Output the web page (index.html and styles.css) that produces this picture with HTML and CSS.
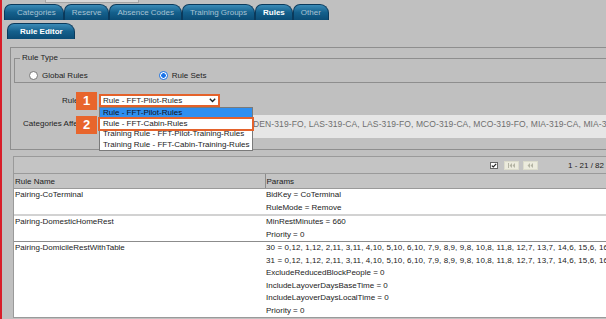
FILE: index.html
```html
<!DOCTYPE html>
<html>
<head>
    <title>Rules - Rule Editor</title>
    <meta charset="UTF-8">
    <meta name="viewport" content="width=device-width, initial-scale=1.0">
    <link rel="stylesheet" href="styles.css">
</head>
<body>
    <div class="page">
        <div class="top-stub"></div>

        <ul class="tabs">
            <li class="tab">Categories</li>
            <li class="tab">Reserve</li>
            <li class="tab">Absence Codes</li>
            <li class="tab">Training Groups</li>
            <li class="tab active">Rules</li>
            <li class="tab">Other</li>
        </ul>
        <ul class="tabs sub-tabs">
            <li class="tab active">Rule Editor</li>
        </ul>

        <div class="editor">
            <fieldset class="rule-type">
                <legend>Rule Type</legend>
                <div class="radios">
                    <label class="radio-opt"><span class="radio"></span>Global Rules</label>
                    <label class="radio-opt"><span class="radio checked"></span>Rule Sets</label>
                </div>
            </fieldset>

            <div class="form-grid">
                <div class="form-label">Rule Set:</div>
                <div class="select-wrap">
                    <div class="select">
                        <span>Rule - FFT-Pilot-Rules</span>
                        <svg width="7" height="5" viewBox="0 0 7 5"><path d="M0.8 0.8 L3.5 3.6 L6.2 0.8" fill="none" stroke="#222" stroke-width="1.4"/></svg>
                    </div>
                    <ul class="dropdown">
                        <li class="selected">Rule - FFT-Pilot-Rules</li>
                        <li class="marked">Rule - FFT-Cabin-Rules</li>
                        <li>Training Rule - FFT-Pilot-Training-Rules</li>
                        <li>Training Rule - FFT-Cabin-Training-Rules</li>
                    </ul>
                    <span class="badge badge-1">1</span>
                    <span class="badge badge-2">2</span>
                </div>

                <div class="form-label cat-label">Categories Affected:</div>
                <div class="cat-field">ATL-319-CA, ATL-319-FO, DEN-319-CA, DEN-319-FO, LAS-319-CA, LAS-319-FO, MCO-319-CA, MCO-319-FO, MIA-319-CA, MIA-319-FO, ORD-319-CA, ORD-319-FO</div>
            </div>
        </div>

        <div class="grid">
            <div class="grid-toolbar">
                <span class="check">
                    <svg width="6" height="5" viewBox="0 0 6 5"><path d="M0.8 2.6 L2.3 4 L5.2 0.8" fill="none" stroke="#222" stroke-width="1.2"/></svg>
                </span>
                <span class="pager-btn">
                    <svg width="7" height="5" viewBox="0 0 7 5"><rect x="0" y="0" width="1" height="5" fill="#b4b4a4"/><path d="M4 0 L1.5 2.5 L4 5 Z M7 0 L4.5 2.5 L7 5 Z" fill="#b4b4a4"/></svg>
                </span>
                <span class="pager-btn">
                    <svg width="6" height="5" viewBox="0 0 6 5"><path d="M3 0 L0.5 2.5 L3 5 Z M6 0 L3.5 2.5 L6 5 Z" fill="#b4b4a4"/></svg>
                </span>
                <span class="pager-info">1 - 21 / 82</span>
            </div>

            <table class="rules">
                <colgroup>
                    <col class="col-name">
                    <col>
                </colgroup>
                <thead>
                    <tr>
                        <th>Rule Name</th>
                        <th>Params</th>
                    </tr>
                </thead>
                <tbody>
                    <tr class="sep-light">
                        <td>Pairing-CoTerminal</td>
                        <td>
                            <div>BidKey = CoTerminal</div>
                            <div>RuleMode = Remove</div>
                        </td>
                    </tr>
                    <tr class="sep-dark">
                        <td>Pairing-DomesticHomeRest</td>
                        <td>
                            <div>MinRestMinutes = 660</div>
                            <div>Priority = 0</div>
                        </td>
                    </tr>
                    <tr>
                        <td>Pairing-DomicileRestWithTable</td>
                        <td>
                            <div class="table-line">30 = 0,12, 1,12, 2,11, 3,11, 4,10, 5,10, 6,10, 7,9, 8,9, 9,8, 10,8, 11,8, 12,7, 13,7, 14,6, 15,6, 16,6, 17,5, 18,5</div>
                            <div class="table-line">31 = 0,12, 1,12, 2,11, 3,11, 4,10, 5,10, 6,10, 7,9, 8,9, 9,8, 10,8, 11,8, 12,7, 13,7, 14,6, 15,6, 16,6, 17,5, 18,5</div>
                            <div>ExcludeReducedBlockPeople = 0</div>
                            <div>IncludeLayoverDaysBaseTime = 0</div>
                            <div>IncludeLayoverDaysLocalTime = 0</div>
                            <div>Priority = 0</div>
                        </td>
                    </tr>
                </tbody>
            </table>
        </div>
    </div>
</body>
</html>
```

FILE: styles.css
```css
body {
    margin: 0;
    background: #c0c0c0;
    font-family: "Liberation Sans", Arial, sans-serif;
    font-size: 8px;
    color: #222;
    overflow: hidden;
}
.page {
    width: 610px;
    min-height: 319px;
    border-left: 2px solid #d81e2a;
}
.top-stub {
    width: 92px;
    height: 2px;
    margin-left: 43px;
    background: #d8d8d8;
    border: 1px solid #a4a4a4;
    border-top: 0;
}
.tabs {
    display: flex;
    list-style: none;
    margin: 1px 0 0 2px;
    padding: 0;
}
.tab {
    height: 15px;
    line-height: 15px;
    padding: 0 7px;
    color: #a9c2d2;
    background: linear-gradient(#3b8bb7, #14608c 50%, #0b4c75);
    border: 1px solid #0a3a5c;
    border-bottom: 0;
    border-radius: 7px 9px 0 0;
    white-space: nowrap;
}
.tab:first-child {
    padding-left: 12px;
}
.tab.active {
    color: #fff;
    font-weight: bold;
}
.sub-tabs {
    margin: 3px 0 0 5px;
}
.sub-tabs .tab {
    padding: 0 11px 0 12px;
}
.editor {
    margin: 8px 0 0 8px;
    border: 1px solid #8e8e8e;
    border-right: 0;
    padding: 5px 0 11px 3px;
}
.rule-type {
    margin: 0;
    padding: 0 0 1px;
    border: 1px solid #8e8e8e;
    border-right: 0;
    min-width: 0;
}
.rule-type legend {
    margin-left: 5px;
    padding: 0 2px;
    line-height: 10px;
}
.radios {
    display: flex;
    align-items: center;
    gap: 71px;
    height: 12px;
    margin-top: 6px;
    padding-left: 14px;
}
.radio-opt {
    display: flex;
    align-items: center;
    gap: 4px;
}
.radio {
    width: 9px;
    height: 9px;
    box-sizing: border-box;
    border: 1px solid #777;
    border-radius: 50%;
    background: #fff;
}
.radio.checked {
    border-color: #1a73e8;
    background: radial-gradient(circle, #1a73e8 0 2px, #fff 2.6px);
}
.form-grid {
    display: grid;
    grid-template-columns: 81px 1fr;
    column-gap: 4px;
    row-gap: 8px;
    margin-top: 11px;
}
.form-label {
    text-align: right;
    line-height: 13px;
    white-space: nowrap;
}
.cat-label {
    line-height: 10px;
    padding-top: 4px;
}
.select-wrap {
    position: relative;
    width: 121px;
}
.select {
    height: 13px;
    box-sizing: border-box;
    border: 2px solid #e4622b;
    background: #fff;
    display: flex;
    align-items: center;
    justify-content: space-between;
    padding: 0 2px;
    line-height: 9px;
    white-space: nowrap;
}
.dropdown {
    position: absolute;
    top: 13px;
    left: 0;
    width: 154px;
    margin: 0;
    padding: 0;
    list-style: none;
    background: #fff;
    border: 1px solid #7a7a7a;
    box-sizing: border-box;
    z-index: 1;
}
.dropdown li {
    height: 10.5px;
    line-height: 10.5px;
    padding-left: 3px;
    white-space: nowrap;
}
.dropdown .selected {
    background: #2e8ff0;
    color: #112;
}
.dropdown .marked {
    outline: 2px solid #e4622b;
}
.badge {
    position: absolute;
    left: -23px;
    width: 21px;
    height: 18px;
    background: #e8652c;
    color: #fff;
    font-size: 13px;
    font-weight: bold;
    line-height: 18px;
    text-align: center;
    z-index: 2;
}
.badge-1 {
    top: -2px;
}
.badge-2 {
    top: 22px;
}
.cat-field {
    height: 23px;
    box-sizing: border-box;
    background: #e6e6e6;
    color: #6e6e6e;
    padding: 4px 0 0 2px;
    font-size: 8.5px;
    line-height: 10px;
    letter-spacing: 0.1px;
    text-indent: -8px;
    white-space: nowrap;
    overflow: hidden;
}
.grid {
    margin: 6px 0 0 11px;
    border: 1px solid #9a9a9a;
    border-right: 0;
    background: #fff;
    overflow: hidden;
}
.grid-toolbar {
    height: 16px;
    background: #c4c4c4;
    display: flex;
    align-items: center;
    justify-content: flex-end;
    padding-right: 8px;
}
.check {
    width: 8px;
    height: 7px;
    box-sizing: border-box;
    background: #fff;
    border: 1px solid #666;
    display: flex;
    align-items: center;
    justify-content: center;
    margin-right: 6px;
}
.pager-btn {
    width: 15px;
    height: 9px;
    box-sizing: border-box;
    background: #ecebdd;
    border: 1px solid #dcdccc;
    display: flex;
    align-items: center;
    justify-content: center;
    margin-right: 4px;
}
.pager-info {
    margin-left: 26px;
}
.rules {
    width: 100%;
    border-collapse: collapse;
    table-layout: fixed;
}
.col-name {
    width: 251px;
}
.rules th {
    height: 14px;
    padding: 0 1px;
    background: #c4c4c4;
    font-weight: normal;
    text-align: left;
    border-top: 1px solid #9a9a9a;
    border-bottom: 1px solid #9a9a9a;
}
.rules th + th {
    border-left: 1px solid #8c8c8c;
}
.rules td {
    vertical-align: top;
    padding: 0 1px;
    line-height: 12.5px;
    white-space: nowrap;
    overflow: hidden;
}
.table-line {
    letter-spacing: 0.1px;
}
.sep-light td {
    border-bottom: 2px solid #d2d2d2;
}
.sep-dark td {
    border-bottom: 1px solid #8c8c8c;
}
```
